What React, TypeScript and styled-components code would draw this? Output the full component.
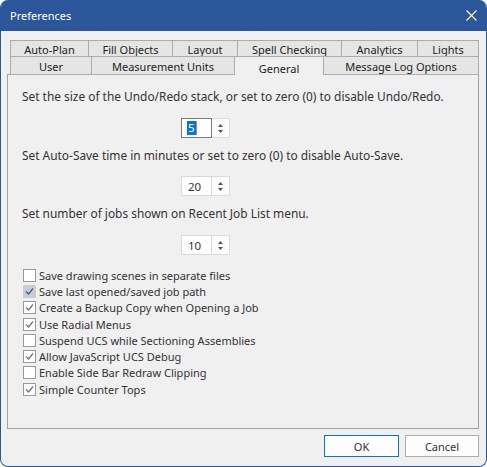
import React from 'react';
import styled, { createGlobalStyle } from 'styled-components';

const GlobalStyle = createGlobalStyle`
  html, body {
    margin: 0;
    padding: 0;
    background: #ffffff;
  }
  body {
    font-family: "Noto Sans", "Open Sans", sans-serif;
    font-size: 11px;
    color: #333333;
  }
`;

const Window = styled.div`
  width: 487px;
  height: 467px;
  box-sizing: border-box;
  display: flex;
  flex-direction: column;
  background: #f0f0f0;
  border: 1px solid #2b579a;
  border-top: none;
  border-radius: 8px;
  overflow: hidden;
`;

const TitleBar = styled.div`
  height: 31px;
  flex: none;
  display: flex;
  align-items: center;
  justify-content: space-between;
  padding: 0 8px 0 9px;
  background: #2b579a;
  color: #ffffff;
  font-size: 11px;
`;

const CloseButton = styled.button`
  width: 14px;
  height: 14px;
  padding: 0;
  border: none;
  background: transparent;
  display: flex;
  align-items: center;
  justify-content: center;
  cursor: pointer;
`;

const Body = styled.div`
  flex: 1;
  display: flex;
  flex-direction: column;
  padding: 9px 7px 7px 6px;
`;

const TabStrip = styled.div`
  display: flex;
  flex-direction: column;
  padding: 0 0 0 3px;
`;

const TabRow = styled.div<{ $h: number }>`
  display: flex;
  height: ${p => p.$h}px;
`;

const TopRow = styled(TabRow)`
  margin-bottom: -1px;
`;

const Tab = styled.div<{ $w: number; $active?: boolean }>`
  box-sizing: border-box;
  width: ${p => p.$w}px;
  margin-right: -1px;
  display: flex;
  align-items: center;
  justify-content: center;
  border: 1px solid #acacac;
  border-bottom: ${p => (p.$active ? 'none' : '1px solid #acacac')};
  background: ${p => (p.$active ? '#f0f0f0' : '#e5e5e5')};
  color: #222222;
  font-size: 11px;
  padding-top: ${p => (p.$active ? '5px' : '1px')};
  height: ${p => (p.$active ? '19px' : 'auto')};
  position: relative;
  z-index: ${p => (p.$active ? 2 : 1)};
`;

const Panel = styled.div`
  flex: none;
  height: 355px;
  box-sizing: border-box;
  margin-top: -1px;
  border: 1px solid #a0a0a0;
  background: #f0f0f0;
  padding: 13px 14px 0 14px;
  display: flex;
  flex-direction: column;
`;

const Prompt = styled.div`
  line-height: 16px;
  height: 16px;
  font-size: 11.9px;
  color: #333333;
  white-space: nowrap;
`;

const SpinRow = styled.div<{ $top: number; $bottom: number }>`
  display: flex;
  margin: ${p => p.$top}px 0 ${p => p.$bottom}px 159px;
  height: 20px;
`;

const SpinInput = styled.div<{ $focused?: boolean }>`
  box-sizing: border-box;
  width: 31px;
  height: 20px;
  border: 1px solid ${p => (p.$focused ? '#7a7a7a' : '#d9d9d9')};
  background: #ffffff;
  display: flex;
  align-items: center;
  padding-left: ${p => (p.$focused ? '5px' : '6px')};
  font-size: 11.5px;
  color: #333333;
`;

const Selected = styled.span`
  background: #0078d7;
  color: #ffffff;
  line-height: 14px;
  padding: 0 1px;
  border-right: 1px solid #e08040;
`;

const SpinButtons = styled.div`
  box-sizing: border-box;
  width: 18px;
  height: 20px;
  border: 1px solid #dcdcdc;
  border-left: none;
  background: #fbfbfb;
  display: flex;
  flex-direction: column;
  align-items: center;
  justify-content: center;
  gap: 3px;
`;

const CheckList = styled.div`
  display: flex;
  flex-direction: column;
  margin-top: 4px;
`;

const CheckRow = styled.label`
  display: flex;
  align-items: center;
  height: 16.3px;
  gap: 3px;
  font-size: 11px;
  color: #333333;
  white-space: nowrap;
  margin-left: 1px;
`;

const Box = styled.span<{ $hover?: boolean }>`
  box-sizing: border-box;
  width: 13px;
  height: 13px;
  flex: none;
  border: 1px solid ${p => (p.$hover ? '#cccccc' : '#999999')};
  background: ${p => (p.$hover ? '#cccccc' : '#ffffff')};
  display: flex;
  align-items: center;
  justify-content: center;
`;

const Footer = styled.div`
  flex: 1;
  display: flex;
  justify-content: flex-end;
  align-items: flex-start;
  gap: 6px;
  padding-top: 6px;
`;

const DialogButton = styled.button<{ $primary?: boolean }>`
  box-sizing: border-box;
  width: ${p => (p.$primary ? 75 : 74)}px;
  height: 22px;
  border: 1px solid ${p => (p.$primary ? '#0078d7' : '#adadad')};
  background: #fdfdfd;
  font-family: "Noto Sans", "Open Sans", sans-serif;
  font-size: 11px;
  color: #333333;
  padding: 0;
`;

const Arrow = ({ up }: { up?: boolean }) => (
  <svg width="5" height="3" viewBox="0 0 5 3">
    <polygon points={up ? '0,3 5,3 2.5,0' : '0,0 5,0 2.5,3'} fill="#555555" />
  </svg>
);

const Check = ({ color }: { color: string }) => (
  <svg width="9" height="9" viewBox="0 0 9 9">
    <polyline points="1,4.5 3.5,7 8,1.5" fill="none" stroke={color} strokeWidth="1.2" />
  </svg>
);

const Spinner = ({ value, focused, top, bottom }: { value: string; focused?: boolean; top: number; bottom: number }) => (
  <SpinRow $top={top} $bottom={bottom}>
    <SpinInput $focused={focused}>{focused ? <Selected>{value}</Selected> : value}</SpinInput>
    <SpinButtons>
      <Arrow up />
      <Arrow />
    </SpinButtons>
  </SpinRow>
);

const topTabs = [
  { label: 'Auto-Plan', w: 79 },
  { label: 'Fill Objects', w: 85 },
  { label: 'Layout', w: 66 },
  { label: 'Spell Checking', w: 105 },
  { label: 'Analytics', w: 77 },
  { label: 'Lights', w: 62 },
];

const bottomTabs = [
  { label: 'User', w: 82 },
  { label: 'Measurement Units', w: 144 },
  { label: 'General', w: 90, active: true },
  { label: 'Message Log Options', w: 156 },
];

const options = [
  { label: 'Save drawing scenes in separate files', checked: false },
  { label: 'Save last opened/saved job path', checked: true, hover: true },
  { label: 'Create a Backup Copy when Opening a Job', checked: true },
  { label: 'Use Radial Menus', checked: true },
  { label: 'Suspend UCS while Sectioning Assemblies', checked: false },
  { label: 'Allow JavaScript UCS Debug', checked: true },
  { label: 'Enable Side Bar Redraw Clipping', checked: false },
  { label: 'Simple Counter Tops', checked: true },
];

export default function App() {
  return (
    <>
      <GlobalStyle />
      <Window>
        <TitleBar>
          <span>Preferences</span>
          <CloseButton aria-label="Close">
            <svg width="11" height="11" viewBox="0 0 11 11">
              <path d="M0.5 0.5 L10.5 10.5 M10.5 0.5 L0.5 10.5" stroke="#ffffff" strokeWidth="1.1" />
            </svg>
          </CloseButton>
        </TitleBar>
        <Body>
          <TabStrip>
            <TopRow $h={17}>
              {topTabs.map(t => (
                <Tab key={t.label} $w={t.w}>{t.label}</Tab>
              ))}
            </TopRow>
            <TabRow $h={19}>
              {bottomTabs.map(t => (
                <Tab key={t.label} $w={t.w} $active={t.active}>{t.label}</Tab>
              ))}
            </TabRow>
          </TabStrip>
          <Panel>
            <Prompt>Set the size of the Undo/Redo stack, or set to zero (0) to disable Undo/Redo.</Prompt>
            <Spinner value="5" focused top={14} bottom={9} />
            <Prompt>Set Auto-Save time in minutes or set to zero (0) to disable Auto-Save.</Prompt>
            <Spinner value="20" top={13} bottom={9} />
            <Prompt>Set number of jobs shown on Recent Job List menu.</Prompt>
            <Spinner value="10" top={14} bottom={8} />
            <CheckList>
              {options.map(o => (
                <CheckRow key={o.label}>
                  <Box $hover={o.hover}>
                    {o.checked && <Check color={o.hover ? '#1565c0' : '#707070'} />}
                  </Box>
                  {o.label}
                </CheckRow>
              ))}
            </CheckList>
          </Panel>
          <Footer>
            <DialogButton $primary>OK</DialogButton>
            <DialogButton>Cancel</DialogButton>
          </Footer>
        </Body>
      </Window>
    </>
  );
}
